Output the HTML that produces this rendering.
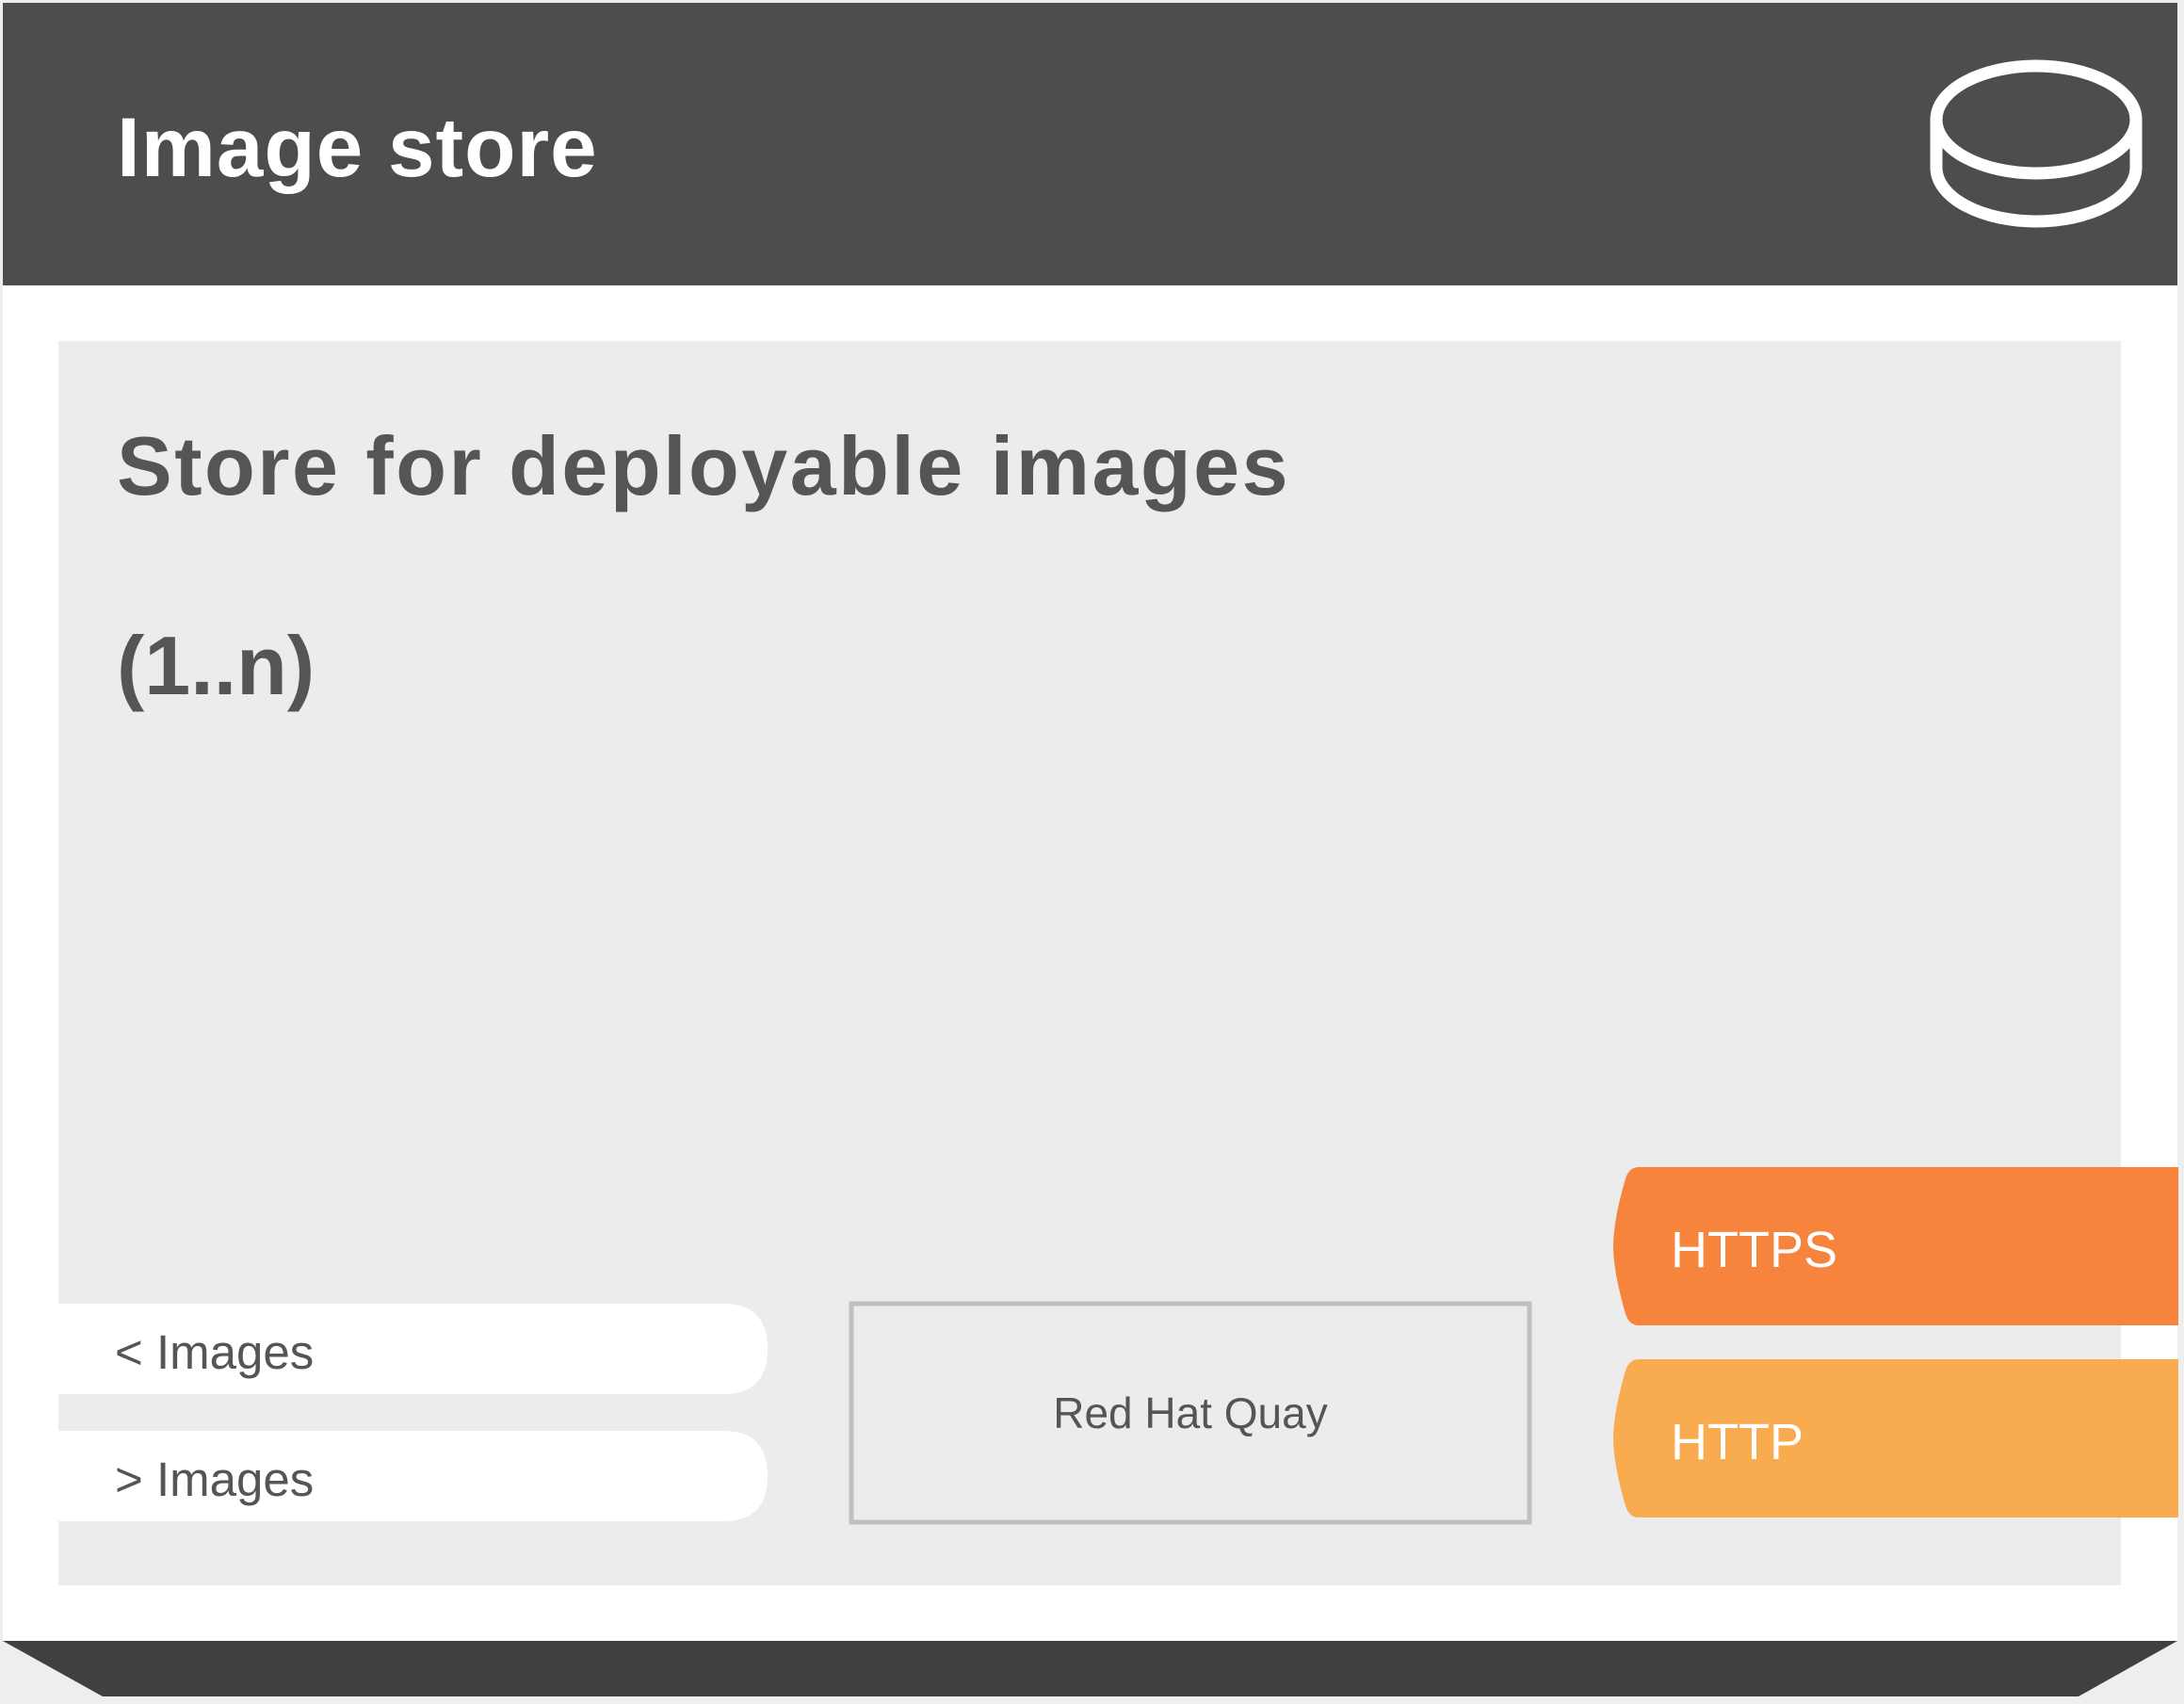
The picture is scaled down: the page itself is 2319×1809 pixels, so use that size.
<!DOCTYPE html>
<html><head><meta charset="utf-8"><style>
html,body{margin:0;padding:0}
body{width:2319px;height:1809px;background:#eeeeee;position:relative;overflow:hidden;font-family:"Liberation Sans",sans-serif}
.a{position:absolute}
</style></head><body>
<div class="a" style="left:3px;top:3px;width:2309px;height:300px;background:#4d4d4d"></div>
<div class="a" style="left:3px;top:303px;width:2309px;height:1439px;background:#ffffff"></div>
<div class="a" style="left:62px;top:362px;width:2190px;height:1321px;background:#ececec"></div>
<svg class="a" style="left:0;top:0" width="2319" height="1809">
<polygon points="3,1742 2312,1742 2207,1801 109,1801" fill="#404040"/>
<g fill="none" stroke="#fff" stroke-width="13">
<ellipse cx="2162" cy="127" rx="106" ry="57"/>
<path d="M2056 127 V178 A106 57 0 0 0 2268 178 V127"/>
</g>
<path d="M1740 1239 H2313 V1407 H1740 Q1730 1407 1726 1395 Q1713 1350 1713 1323 Q1713 1296 1726 1251 Q1730 1239 1740 1239Z" fill="#f6843c"/>
<path d="M1740 1443 H2313 V1611 H1740 Q1730 1611 1726 1599 Q1713 1554 1713 1527 Q1713 1500 1726 1455 Q1730 1443 1740 1443Z" fill="#f9ab50"/>
<path d="M62 1384 H768 Q815 1384 815 1432 Q815 1480 768 1480 H62Z" fill="#fff"/>
<path d="M62 1519 H768 Q815 1519 815 1567 Q815 1615 768 1615 H62Z" fill="#fff"/>
<rect x="904" y="1384" width="720" height="232" fill="#ececec" stroke="#c0c0c0" stroke-width="5"/>
</svg>
<div class="a" style="left:124px;top:112px;font-size:89px;font-weight:bold;color:#fff;line-height:1;white-space:nowrap;letter-spacing:1px">Image store</div>
<div class="a" style="left:124px;top:451px;font-size:88px;font-weight:bold;color:#555;line-height:1;white-space:nowrap;letter-spacing:2.5px">Store for deployable images</div>
<div class="a" style="left:124px;top:663px;font-size:88px;font-weight:bold;color:#555;line-height:1;white-space:nowrap">(1..n)</div>
<div class="a" style="left:122px;top:1410px;font-size:51px;color:#555;line-height:1;white-space:nowrap">&lt; Images</div>
<div class="a" style="left:122px;top:1545px;font-size:51px;color:#555;line-height:1;white-space:nowrap">&gt; Images</div>
<div class="a" style="left:902px;top:1477px;width:724px;text-align:center;font-size:46px;color:#555;line-height:1;white-space:nowrap">Red Hat Quay</div>
<div class="a" style="left:1774px;top:1300px;font-size:54px;color:#fff;line-height:1;white-space:nowrap">HTTPS</div>
<div class="a" style="left:1774px;top:1504px;font-size:54px;color:#fff;line-height:1;white-space:nowrap">HTTP</div>
</body></html>
